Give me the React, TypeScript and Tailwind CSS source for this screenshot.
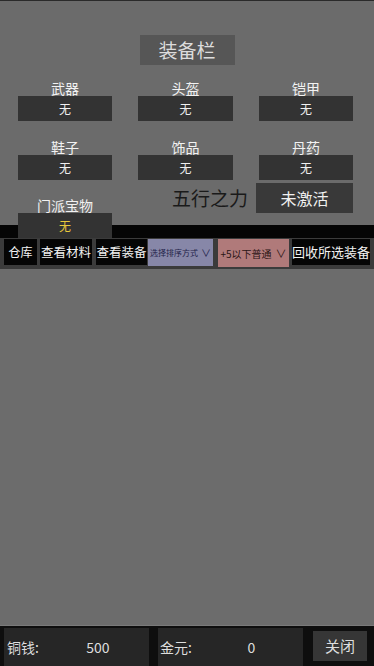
import React from "react";

const font = { fontFamily: '"Noto Sans CJK SC", "Noto Sans", sans-serif' };

function Slot({ label, value, yellow }: { label: string; value: string; yellow?: boolean }) {
  return (
    <div className="flex flex-col items-center">
      <div className="h-[16px] text-[14px] leading-[16px] text-[#f2f2f2]">{label}</div>
      <div
        className={`flex h-[25px] w-full items-center justify-center bg-[#333333] text-[12px] ${
          yellow ? "text-[#e8c93c]" : "text-[#f0f0f0]"
        }`}
      >
        {value}
      </div>
    </div>
  );
}

export default function App() {
  return (
    <div style={font} className="flex h-[666px] w-[374px] flex-col overflow-hidden border-t border-[#2a2a2a] bg-[#6b6b6b]">
      <div className="h-[224px] shrink-0">
        <div className="flex justify-center pt-[34px]">
          <div className="flex h-[30px] w-[95px] items-center justify-center bg-[#565656] text-[19px] text-[#dcdcdc]">
            装备栏
          </div>
        </div>
        <div className="mt-[15px] grid grid-cols-[94px_95px_94px] gap-x-[26px] gap-y-[18px] pl-[18px]">
          <Slot label="武器" value="无" />
          <Slot label="头盔" value="无" />
          <Slot label="铠甲" value="无" />
          <Slot label="鞋子" value="无" />
          <Slot label="饰品" value="无" />
          <Slot label="丹药" value="无" />
        </div>
        <div className="flex pl-[18px]">
          <div className="relative z-10 mt-[17px] w-[94px]">
            <Slot label="门派宝物" value="无" yellow />
          </div>
          <div className="ml-[60px] mt-[3px] flex h-[30px] items-center text-[19px] text-[#1a1a1a]">五行之力</div>
          <div className="ml-[8px] mt-[3px] flex h-[30px] w-[97px] items-center justify-center bg-[#393939] text-[16px] text-[#f0f0f0]">
            未激活
          </div>
        </div>
      </div>
      <div className="h-[13px] shrink-0 bg-[#050505]" />
      <div className="flex h-[31px] shrink-0 items-start bg-[#3b3b3b] pl-[4px] pt-[1px] text-[12px] text-[#f2f2f2]">
        <div className="flex h-[26px] w-[33px] items-center justify-center bg-[#050505]">仓库</div>
        <div className="ml-[3px] flex h-[26px] w-[52px] items-center justify-center bg-[#050505] text-[12.5px]">查看材料</div>
        <div className="ml-[4px] flex h-[26px] w-[51px] items-center justify-center bg-[#050505] text-[12.5px]">查看装备</div>
        <div className="ml-[1px] flex h-[27px] w-[65px] items-center justify-center gap-[3px] bg-[#8787a8] text-[8px] text-[#1f1f4a]">
          选择排序方式<span className="text-[10px]">∨</span>
        </div>
        <div className="ml-[5px] flex h-[28px] w-[71px] items-center justify-center gap-[4px] bg-[#b07a7a] text-[10px] text-[#2a1515]">
          +5以下普通<span className="text-[11px]">∨</span>
        </div>
        <div className="ml-[3px] flex h-[26px] w-[78px] items-center justify-center bg-[#050505] text-[13px]">回收所选装备</div>
      </div>
      <div className="flex-1 border-b border-[#7a7a7a] bg-[#6c6c6c]" />
      <div className="flex h-[40px] shrink-0 items-end bg-[#0e0e0e] pl-[4px] text-[#dedede]">
        <div className="flex h-[38px] w-[145px] items-center bg-[#262626] pl-[3px] text-[14px]">
          <span>铜钱:</span>
          <span className="flex-1 pl-[8px] text-center">500</span>
        </div>
        <div className="ml-[9px] flex h-[38px] w-[145px] items-center bg-[#262626] pl-[2px] text-[14px]">
          <span>金元:</span>
          <span className="flex-1 pl-[8px] text-center">0</span>
        </div>
        <div className="mb-[5px] ml-[10px] flex h-[30px] w-[54px] items-center justify-center bg-[#363636] text-[15px]">
          关闭
        </div>
      </div>
    </div>
  );
}
